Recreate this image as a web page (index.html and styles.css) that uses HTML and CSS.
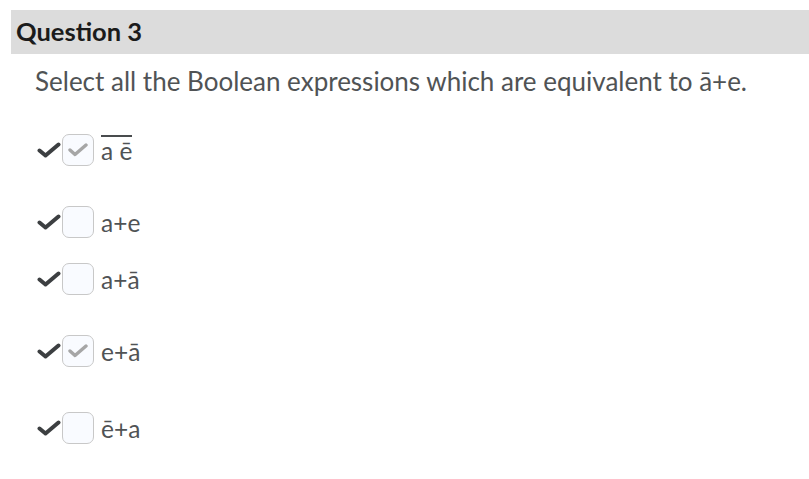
FILE: index.html
```html
<!DOCTYPE html>
<html>
<head>
<meta charset="utf-8">
<link rel="stylesheet" href="styles.css">
</head>
<body>
<div class="header"><h2 class="title">Question 3</h2></div>
<p class="prompt">Select all the Boolean expressions which are equivalent to ā+e.</p>
<div class="options">
  <div class="row r1">
    <svg class="mark" viewBox="0 0 24 16" width="24" height="16"><polyline points="2.5,8.5 8.5,13.5 21.5,2.5" fill="none" stroke="#3c3f41" stroke-width="4" stroke-linecap="round" stroke-linejoin="round"/></svg>
    <span class="box"><svg class="inner" viewBox="0 0 20 14" width="20" height="14"><polyline points="2,7 7,11.5 18,2" fill="none" stroke="#a6a6a6" stroke-width="3.4" stroke-linecap="round" stroke-linejoin="round"/></svg></span>
    <span class="label"><span class="over">a ē</span></span>
  </div>
  <div class="row r2">
    <svg class="mark" viewBox="0 0 24 16" width="24" height="16"><polyline points="2.5,8.5 8.5,13.5 21.5,2.5" fill="none" stroke="#3c3f41" stroke-width="4" stroke-linecap="round" stroke-linejoin="round"/></svg>
    <span class="box"></span>
    <span class="label">a+e</span>
  </div>
  <div class="row r3">
    <svg class="mark" viewBox="0 0 24 16" width="24" height="16"><polyline points="2.5,8.5 8.5,13.5 21.5,2.5" fill="none" stroke="#3c3f41" stroke-width="4" stroke-linecap="round" stroke-linejoin="round"/></svg>
    <span class="box"></span>
    <span class="label">a+ā</span>
  </div>
  <div class="row r4">
    <svg class="mark" viewBox="0 0 24 16" width="24" height="16"><polyline points="2.5,8.5 8.5,13.5 21.5,2.5" fill="none" stroke="#3c3f41" stroke-width="4" stroke-linecap="round" stroke-linejoin="round"/></svg>
    <span class="box"><svg class="inner" viewBox="0 0 20 14" width="20" height="14"><polyline points="2,7 7,11.5 18,2" fill="none" stroke="#a6a6a6" stroke-width="3.4" stroke-linecap="round" stroke-linejoin="round"/></svg></span>
    <span class="label">e+ā</span>
  </div>
  <div class="row r5">
    <svg class="mark" viewBox="0 0 24 16" width="24" height="16"><polyline points="2.5,8.5 8.5,13.5 21.5,2.5" fill="none" stroke="#3c3f41" stroke-width="4" stroke-linecap="round" stroke-linejoin="round"/></svg>
    <span class="box"></span>
    <span class="label">ē+a</span>
  </div>
</div>
</body>
</html>
```
FILE: styles.css
```css
html, body {
  margin: 0;
  padding: 0;
  background: #ffffff;
  font-family: Lato, "Open Sans", sans-serif;
}
.header {
  margin: 10px 0 0 11px;
  height: 44px;
  background: #dcdcdc;
  display: flex;
  align-items: center;
}
.title {
  margin: -2px 0 0 5px;
  font-size: 25.5px;
  font-weight: 700;
  color: #1b1b1b;
}
.prompt {
  margin: 11px 0 0 35px;
  font-size: 26px;
  line-height: 32px;
  color: #505355;
}
.options {
  display: flex;
  flex-direction: column;
  padding-left: 37px;
}
.row {
  display: flex;
  align-items: center;
  height: 32px;
}
.r1 { margin-top: 37px; }
.r2 { margin-top: 40px; }
.r3 { margin-top: 25px; }
.r4 { margin-top: 40px; }
.r5 { margin-top: 45px; }
.mark {
  display: block;
  margin-right: 1px;
}
.box {
  box-sizing: border-box;
  width: 32px;
  height: 32px;
  border: 1px solid #c8c8c8;
  border-radius: 7px;
  background: #f9fbff;
  display: flex;
  align-items: center;
  justify-content: center;
}
.inner { display: block; }
.label {
  margin-left: 7px;
  font-size: 24.5px;
  color: #505355;
}
.over {
  border-top: 2px solid #494c4e;
  padding-top: 2px;
  line-height: 24px;
  display: inline-block;
}
```
